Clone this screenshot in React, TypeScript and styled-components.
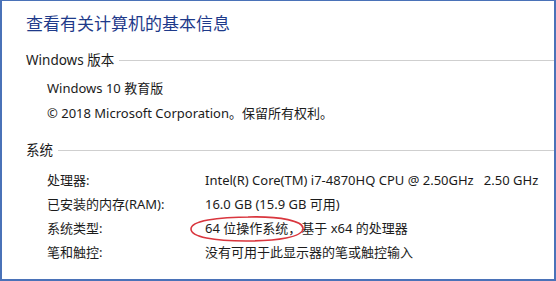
import React from 'react';
import styled, { createGlobalStyle } from 'styled-components';

const GlobalStyle = createGlobalStyle`
  html, body {
    margin: 0;
    padding: 0;
    background: #ffffff;
  }
  body {
    overflow: hidden;
  }
`;

const Frame = styled.div`
  position: relative;
  box-sizing: border-box;
  width: 556px;
  height: 281px;
  overflow: hidden;
  border: 2px solid #4a72b8;
  border-top-width: 1px;
  background: #ffffff;
  color: #1b1b1b;
  font-family: "Noto Sans", "Noto Sans CJK SC", sans-serif;
  font-size: 13px;
`;

const Title = styled.h1`
  margin: 0;
  padding: 11px 0 0 24px;
  font-size: 17px;
  font-weight: 400;
  line-height: 24px;
  color: #1e3a8a;
`;

const SectionHeader = styled.div<{ $top: number }>`
  display: flex;
  align-items: center;
  margin-top: ${(p) => p.$top}px;
  padding-left: 24px;
  line-height: 20px;
  font-size: 13.5px;
  span {
    white-space: nowrap;
  }
  &::after {
    content: '';
    flex: 1;
    height: 1px;
    margin-left: 5px;
    background: #cfcfcf;
  }
`;

const Block = styled.div`
  padding: 8px 0 0 45px;
  display: flex;
  flex-direction: column;
  gap: 5px;
  line-height: 20px;
`;

const Table = styled.div`
  padding: 10px 0 0 45px;
  display: grid;
  grid-template-columns: 158px auto;
  row-gap: 4px;
  line-height: 20px;
  white-space: pre;
`;

const Mark = styled.svg`
  position: absolute;
  left: 186px;
  top: 214px;
  pointer-events: none;
`;

const rows: [string, string][] = [
  ['处理器:', 'Intel(R) Core(TM) i7-4870HQ CPU @ 2.50GHz   2.50 GHz'],
  ['已安装的内存(RAM):', '16.0 GB (15.9 GB 可用)'],
  ['系统类型:', '64 位操作系统，基于 x64 的处理器'],
  ['笔和触控:', '没有可用于此显示器的笔或触控输入'],
];

const App: React.FC = () => (
  <>
    <GlobalStyle />
    <Frame>
      <Title>查看有关计算机的基本信息</Title>
      <SectionHeader $top={14}>
        <span>Windows 版本</span>
      </SectionHeader>
      <Block>
        <div>Windows 10 教育版</div>
        <div>© 2018 Microsoft Corporation。保留所有权利。</div>
      </Block>
      <SectionHeader $top={17}>
        <span>系统</span>
      </SectionHeader>
      <Table>
        {rows.map(([k, v]) => (
          <React.Fragment key={k}>
            <div>{k}</div>
            <div>{v}</div>
          </React.Fragment>
        ))}
      </Table>
      <Mark width="118" height="28" viewBox="0 0 118 28">
        <path
          d="M60 2 C92 1 116 6 115 14 C114 22 90 26 58 26 C26 26 3 22 3 14 C3 6 28 2 64 2"
          fill="none"
          stroke="#d9363e"
          strokeWidth="1.6"
        />
      </Mark>
    </Frame>
  </>
);

export default App;
